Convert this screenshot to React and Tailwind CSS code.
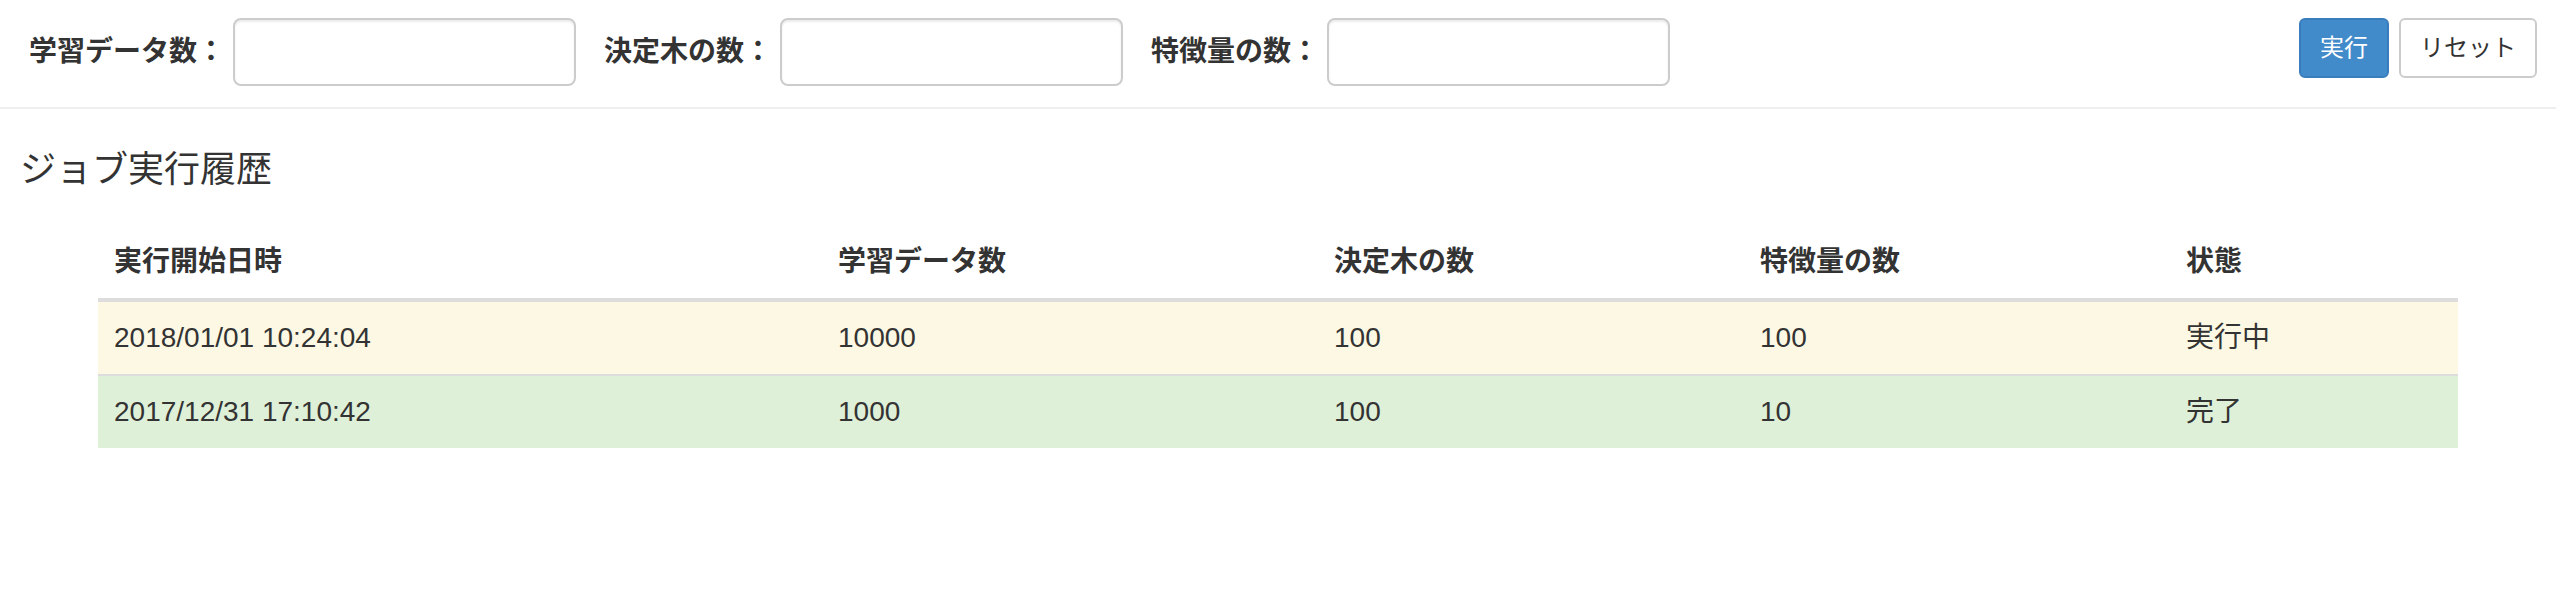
export default function App() {
    const fields = ["学習データ数：", "決定木の数：", "特徴量の数："];

    const columns = [
        { name: "実行開始日時", width: "w-[724px]" },
        { name: "学習データ数", width: "w-[496px]" },
        { name: "決定木の数", width: "w-[426px]" },
        { name: "特徴量の数", width: "w-[426px]" },
        { name: "状態", width: "w-[288px]" },
    ];

    const jobs = [
        { started: "2018/01/01 10:24:04", data: "10000", trees: "100", features: "100", status: "実行中", rowClass: "bg-[#fcf8e3]" },
        { started: "2017/12/31 17:10:42", data: "1000", trees: "100", features: "10", status: "完了", rowClass: "bg-[#dff0d8]" },
    ];

    return (
        <div className="min-h-screen bg-white text-[#333] font-['Liberation_Sans','Noto_Sans_CJK_JP',sans-serif]">
            {/* Top form */}
            <header className="flex items-start justify-between pl-[29px] pr-[19px] pt-[18px] pb-[21px] border-b-2 border-[#eeeeee]">
                <div className="flex items-center gap-[28px]">
                    {fields.map((label) => (
                        <div key={label} className="flex items-center gap-[8px]">
                            <label className="text-[28px] leading-[40px] font-bold">{label}</label>
                            <input
                                type="text"
                                className="w-[343px] h-[68px] px-[24px] text-[28px] bg-white border-2 border-[#cccccc] rounded-[8px] shadow-[inset_0_2px_2px_rgba(0,0,0,0.075)] outline-none"
                            />
                        </div>
                    ))}
                </div>

                <div className="flex items-center gap-[10px]">
                    <button className="h-[60px] px-[19px] text-[24px] leading-[32px] text-white bg-[#428bca] border-2 border-[#3a7dbd] rounded-[6px]">
                        実行
                    </button>
                    <button className="h-[60px] px-[19px] text-[24px] leading-[32px] text-[#333] bg-white border-2 border-[#cccccc] rounded-[6px]">
                        リセット
                    </button>
                </div>
            </header>

            {/* Job history */}
            <main className="pt-[41px]">
                <h4 className="pl-[20px] text-[36px] leading-[40px] font-normal">ジョブ実行履歴</h4>

                <div className="px-[98px] mt-[36px]">
                    <table className="w-full table-fixed border-collapse text-[28px] leading-[40px]">
                        <thead>
                            <tr>
                                {columns.map((col) => (
                                    <th
                                        key={col.name}
                                        className={`${col.width} p-[16px] text-left font-bold border-b-4 border-[#dddddd]`}
                                    >
                                        {col.name}
                                    </th>
                                ))}
                            </tr>
                        </thead>
                        <tbody>
                            {jobs.map((job) => (
                                <tr key={job.started} className={job.rowClass}>
                                    <td className="p-[16px] border-t-2 border-[#dddddd]">{job.started}</td>
                                    <td className="p-[16px] border-t-2 border-[#dddddd]">{job.data}</td>
                                    <td className="p-[16px] border-t-2 border-[#dddddd]">{job.trees}</td>
                                    <td className="p-[16px] border-t-2 border-[#dddddd]">{job.features}</td>
                                    <td className="p-[16px] border-t-2 border-[#dddddd]">{job.status}</td>
                                </tr>
                            ))}
                        </tbody>
                    </table>
                </div>
            </main>
        </div>
    );
}
